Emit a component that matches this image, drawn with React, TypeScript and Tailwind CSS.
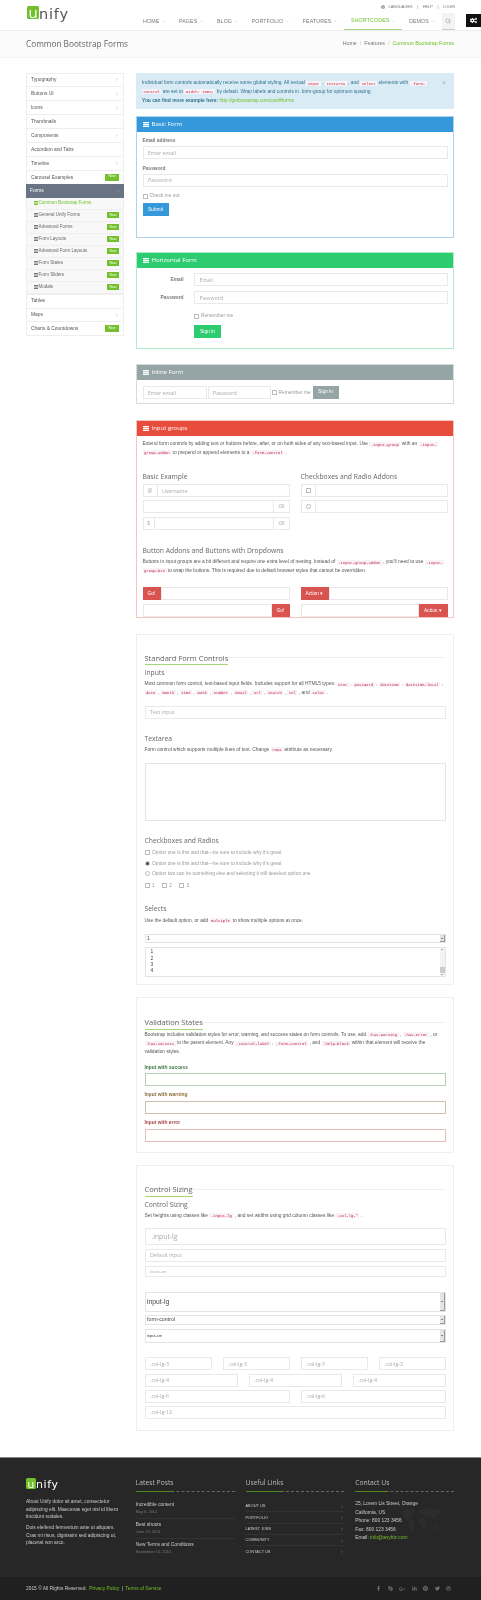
import React from "react";
import { ChevronRight, ChevronDown, Search } from "lucide-react";
import { FaCogs, FaGlobe, FaFacebookF, FaSkype, FaGooglePlusG, FaLinkedinIn, FaPinterest, FaTwitter, FaDribbble } from "react-icons/fa";

const C = ({ children }: { children: React.ReactNode }) => (
  <code className="font-['Liberation_Mono',monospace] text-[3.9px] text-[#c7254e] bg-[#f9f2f4] px-[1.5px] py-[0.5px]">{children}</code>
);

const Inp = ({ ph, className = "" }: { ph?: string; className?: string }) => (
  <input readOnly placeholder={ph} className={"block w-full min-w-0 h-[13px] border border-[#e9e9e9] px-[4.5px] text-[5.25px] font-['Open_Sans',sans-serif] bg-white outline-none placeholder:text-[#aaa] " + className} />
);

const Check = ({ round = false, dot = false }: { round?: boolean; dot?: boolean }) => (
  <span className={"inline-flex items-center justify-center shrink-0 w-[5px] h-[5px] border border-[#bbb] bg-white " + (round ? "rounded-full" : "rounded-[0.5px]")}>
    {dot && <span className="w-[3px] h-[3px] rounded-full bg-[#444]" />}
  </span>
);

const TaskIcon = () => (
  <svg width="6" height="5" viewBox="0 0 6 5" className="shrink-0">
    <rect width="6" height="1.3" y="0" fill="#fff" />
    <rect width="6" height="1.3" y="1.85" fill="#fff" />
    <rect width="6" height="1.3" y="3.7" fill="#fff" />
  </svg>
);

const Panel = ({ title, bg, border, h, children }: { title: string; bg: string; border: string; h: string; children: React.ReactNode }) => (
  <section className={"border rounded-[0.5px] bg-white " + border + " " + h}>
    <div className={"h-[14.5px] flex items-center gap-[3px] pl-[5.5px] text-white text-[6px] font-['Open_Sans',sans-serif] " + bg}>
      <TaskIcon />
      {title}
    </div>
    {children}
  </section>
);

const Box = ({ h, children }: { h: string; children: React.ReactNode }) => (
  <section className={"border border-[#efefef] bg-white px-[7.5px] " + h}>{children}</section>
);

const H2 = ({ children, pt }: { children: React.ReactNode; pt: string }) => (
  <div className={"border-b border-[#f0f0f0] h-[14.5px] " + pt}>
    <span className="inline-block h-[14.5px] leading-[14px] text-[7.5px] text-[#666] font-['Open_Sans',sans-serif] border-b-[1.2px] border-[#a5d77a]">{children}</span>
  </div>
);

const H4 = ({ children, cls = "" }: { children: React.ReactNode; cls?: string }) => (
  <div className={"text-[6.75px] leading-[9px] text-[#666] font-['Open_Sans',sans-serif] " + cls}>{children}</div>
);

const P = ({ children, cls = "" }: { children: React.ReactNode; cls?: string }) => (
  <p className={"text-[4.875px] leading-[7.8px] text-[#555] " + cls}>{children}</p>
);

const Select = ({ label, h, text }: { label: string; h: string; text: string }) => (
  <div className={"flex items-center border border-[#e4e4e4] bg-white pl-[1.5px] text-[#444] " + h + " " + text}>
    <span className="grow">{label}</span>
    <span className="w-[5px] h-full bg-[#e4e4e4] border-r border-b border-[#999] flex items-center justify-center">
      <span className="border-l-[1.2px] border-r-[1.2px] border-t-[1.5px] border-l-transparent border-r-transparent border-t-[#222]" />
    </span>
  </div>
);

const side = [
  ["Typography", "c"], ["Buttons UI", "c"], ["Icons", "c"], ["Thumbnails", ""], ["Components", "c"],
  ["Accordion and Tabs", ""], ["Timeline", "c"], ["Carousel Examples", "n"],
];
const subs = [
  ["Common Bootstrap Forms", 0], ["General Unify Forms", 1], ["Advanced Forms", 1], ["Form Layouts", 1],
  ["Advanced Form Layouts", 1], ["Form States", 1], ["Form Sliders", 1], ["Modals", 1],
] as [string, number][];

const SideRow = ({ label, kind }: { label: string; kind: string }) => (
  <div className="h-[14.9px] flex items-center justify-between border border-[#eee] -mb-px px-[4px] text-[4.875px] text-[#555] bg-white">
    <span>{label}</span>
    {kind === "c" && <ChevronRight size={4} strokeWidth={2} className="text-[#888]" />}
    {kind === "n" && <span className="bg-[#72c02c] text-white text-[3.6px] w-[14px] h-[7px] flex items-center justify-center">New</span>}
  </div>
);

const Sidebar = () => (
  <aside className="w-[98px] shrink-0">
    {side.map(([l, k]) => <SideRow key={l} label={l} kind={k} />)}
    <div className="h-[14px] relative flex items-center justify-between bg-[#687483] px-[4px] text-[4.875px] text-white">
      <span>Forms</span>
      <ChevronDown size={4} strokeWidth={2} className="text-[#ccc]" />
    </div>
    {subs.map(([l, n]) => (
      <div key={l} className="h-[12px] flex items-center justify-between bg-[#f8f8f8] border-b border-x border-[#eee] pl-[6.5px] pr-[4px] text-[4.5px]">
        <span className={"flex items-center gap-[1px] " + (n ? "text-[#666]" : "text-[#72c02c]")}>
          <span className={"w-[4px] h-[3.4px] border-y-[1px] " + (n ? "border-[#777] bg-[#bbb]" : "border-[#72c02c] bg-[#b8df95]")} />
          {l}
        </span>
        {n ? <span className="bg-[#72c02c] text-white text-[3.4px] w-[12px] h-[6.5px] flex items-center justify-center">New</span> : null}
      </div>
    ))}
    <SideRow label="Tables" kind="" />
    <SideRow label="Maps" kind="c" />
    <SideRow label="Charts & Countdowns" kind="n" />
  </aside>
);

const Logo = ({ dark }: { dark?: boolean }) => (
  <div className="flex items-start">
    <span className={"bg-[#72c02c] text-white rounded-[1.5px] flex items-end justify-center font-['Open_Sans',sans-serif] " + (dark ? "w-[9.5px] h-[11px] text-[11px] leading-[11px]" : "w-[12px] h-[13px] text-[15px] leading-[13px]")}>u</span>
    <span className={"font-['DejaVu_Sans',sans-serif] " + (dark ? "text-white text-[11px] leading-[14px] tracking-[0.6px] pl-[0.5px]" : "text-[#555] text-[14.5px] leading-[17px] tracking-[0.8px]")}>nify</span>
  </div>
);

const Header = () => (
  <header className="h-[31px] border-b border-[#eee] bg-white relative">
    <div className="flex justify-between pl-[27px] pr-[26px]">
      <div className="pt-[6px]"><Logo /></div>
      <div className="flex flex-col items-end">
        <div className="h-[13px] flex items-center gap-[3px] text-[3.9px] text-[#777]">
          <FaGlobe className="w-[4px] h-[4px]" /> LANGUAGES <span className="px-[1.5px]">|</span> HELP <span className="px-[1.5px]">|</span> LOGIN
        </div>
        <nav className="h-[17px] flex items-stretch text-[5.25px] tracking-[0.15px] text-[#777]">
          {["HOME", "PAGES", "BLOG", "PORTFOLIO", "FEATURES", "SHORTCODES", "DEMOS"].map((n) => (
            <div key={n} className={"flex items-center gap-[2.5px] px-[7px] " + (n === "SHORTCODES" ? "text-[#72c02c] border-b-[1.5px] border-[#a5d77a]" : "")}>
              {n}<ChevronDown size={3} strokeWidth={2} />
            </div>
          ))}
          <div className="w-[13.5px] bg-[#f3f3f3] border-b-[1.5px] border-[#ccc] flex items-center justify-center">
            <Search size={6} strokeWidth={1.5} className="text-[#777]" />
          </div>
        </nav>
      </div>
    </div>
    <div className="absolute right-0 top-[14px] w-[15px] h-[13px] bg-[#111] flex items-center justify-center text-white">
      <FaCogs className="w-[7px] h-[7px]" />
    </div>
  </header>
);

const PageBar = () => (
  <div className="h-[27px] bg-[#fbfbfb] border-b border-[#f5f5f5] flex items-center justify-between pl-[26px] pr-[27px]">
    <div className="text-[8.25px] text-[#666] font-['Open_Sans',sans-serif]">Common Bootstrap Forms</div>
    <div className="text-[5.25px] text-[#777] flex gap-[3px]">
      <span>Home</span><span className="text-[#bbb]">/</span><span>Features</span><span className="text-[#bbb]">/</span><span className="text-[#72c02c]">Common Bootstrap Forms</span>
    </div>
  </div>
);

const Label = ({ children, cls = "" }: { children: React.ReactNode; cls?: string }) => (
  <div className={"text-[4.875px] leading-[7px] font-bold text-[#777] " + cls}>{children}</div>
);

const AddOn = ({ children, cls = "" }: { children: React.ReactNode; cls?: string }) => (
  <span className={"h-[13px] flex items-center justify-center shrink-0 border border-[#e9e9e9] text-[4.875px] text-[#aaa] bg-white " + cls}>{children}</span>
);

const Btn = ({ children, cls = "" }: { children: React.ReactNode; cls?: string }) => (
  <span className={"flex items-center justify-center shrink-0 text-white text-[4.875px] h-[13px] " + cls}>{children}</span>
);

const Main = () => (
  <main className="w-[318px] ml-[12px]">
    <div className="h-[36px] mt-[0.5px] bg-[#d9ecf6] pl-[6px] pt-[6px] relative">
      <P cls="!text-[#31708f]">
        Individual form controls automatically receive some global styling. All textual <C>input</C> , <C>textarea</C> , and <C>select</C> elements with <C>.form-</C><br />
        <C>control</C> are set to <C>width: 100%;</C> by default. Wrap labels and controls in .form-group for optimum spacing.<br />
        <b>You can find more example here:</b> <span className="text-[#72c02c]">http://getbootstrap.com/css/#forms</span>
      </P>
      <span className="absolute right-[8px] top-[6px] text-[7px] leading-[8px] text-[#aab]">×</span>
    </div>

    <div className="mt-[7px]">
      <Panel title="Basic Form" bg="bg-[#3498db]" border="border-[#a9d3f0]" h="h-[122px]">
        <div className="px-[5.5px] pt-[5px]">
          <Label>Email address</Label>
          <Inp ph="Enter email" className="mt-[2.5px]" />
          <Label cls="mt-[5.5px]">Password</Label>
          <Inp ph="Password" className="mt-[2px]" />
          <div className="flex items-center gap-[2px] mt-[6.5px] text-[4.875px] text-[#999] h-[6px]"><Check /> Check me out</div>
          <Btn cls="bg-[#3498db] w-[26px] mt-[4px]">Submit</Btn>
        </div>
      </Panel>
    </div>

    <div className="mt-[14px]">
      <Panel title="Horizontal Form" bg="bg-[#2ecc71]" border="border-[#b3ecca]" h="h-[97px]">
        <div className="pt-[5.5px] pr-[5.5px]">
          <div className="flex items-center">
            <Label cls="w-[46.5px] text-right shrink-0">Email</Label>
            <Inp ph="Email" className="ml-[10.5px]" />
          </div>
          <div className="flex items-center mt-[5px]">
            <Label cls="w-[46.5px] text-right shrink-0">Password</Label>
            <Inp ph="Password" className="ml-[10.5px]" />
          </div>
          <div className="ml-[57px]">
            <div className="flex items-center gap-[2px] mt-[9px] text-[4.875px] text-[#999] h-[6px]"><Check /> Remember me</div>
            <Btn cls="bg-[#2ecc71] w-[27px] mt-[6px]">Sign in</Btn>
          </div>
        </div>
      </Panel>
    </div>

    <div className="mt-[15px]">
      <Panel title="Inline Form" bg="bg-[#95a5a6]" border="border-[#d5dcdd]" h="h-[40px]">
        <div className="flex items-center pl-[5.5px] pt-[6.5px]">
          <Inp ph="Enter email" className="!w-[64px]" />
          <Inp ph="Password" className="!w-[63px] ml-[1px]" />
          <span className="ml-[1px] flex items-center gap-[2px] text-[4.875px] text-[#999] w-[40px] whitespace-nowrap"><Check /> Remember me</span>
          <Btn cls="bg-[#95a5a6] w-[26px] ml-[1px] -mt-[1px]">Sign in</Btn>
        </div>
      </Panel>
    </div>

    <div className="mt-[16px]">
      <Panel title="Input groups" bg="bg-[#e74c3c]" border="border-[#f8c4be]" h="h-[198px]">
        <div className="px-[5.5px] pt-[4.5px]">
          <P>
            Extend form controls by adding text or buttons before, after, or on both sides of any text-based input. Use <C>.input-group</C> with an <C>.input-</C><br />
            <C>group-addon</C> to prepend or append elements to a <C>.form-control</C> .
          </P>
          <div className="grid grid-cols-2 gap-x-[11px] mt-[14px]">
            <div>
              <H4 cls="h-[10px]">Basic Example</H4>
              <div className="flex mt-[2.5px]"><AddOn cls="w-[15px]">@</AddOn><Inp ph="Username" className="-ml-px" /></div>
              <div className="flex mt-[3px]"><Inp className="-mr-px" /><AddOn cls="w-[17px]">.00</AddOn></div>
              <div className="flex mt-[4px]"><AddOn cls="w-[12px]">$</AddOn><Inp className="-mx-px" /><AddOn cls="w-[17px]">.00</AddOn></div>
            </div>
            <div>
              <H4 cls="h-[10px]">Checkboxes and Radio Addons</H4>
              <div className="flex mt-[2.5px]"><AddOn cls="w-[15px]"><Check /></AddOn><Inp className="-ml-px" /></div>
              <div className="flex mt-[3px]"><AddOn cls="w-[15px]"><Check round /></AddOn><Inp className="-ml-px" /></div>
            </div>
          </div>
          <H4 cls="mt-[15.5px]">Button Addons and Buttons with Dropdowns</H4>
          <P cls="mt-[3.5px]">
            Buttons in input groups are a bit different and require one extra level of nesting. Instead of <C>.input-group-addon</C> , you'll need to use <C>.input-</C><br />
            <C>group-btn</C> to wrap the buttons. This is required due to default browser styles that cannot be overridden.
          </P>
          <div className="grid grid-cols-2 gap-x-[11px] gap-y-[4px] mt-[11.4px]">
            <div className="flex"><Btn cls="bg-[#d9534f] w-[18px]">Go!</Btn><Inp /></div>
            <div className="flex"><Btn cls="bg-[#d9534f] w-[28px]">Action ▾</Btn><Inp /></div>
            <div className="flex"><Inp /><Btn cls="bg-[#d9534f] w-[18px]">Go!</Btn></div>
            <div className="flex"><Inp /><Btn cls="bg-[#d9534f] w-[29px]">Action ▾</Btn></div>
          </div>
        </div>
      </Panel>
    </div>

    <div className="mt-[16px]">
      <Box h="h-[351px]">
        <H2 pt="mt-[8.5px]">Standard Form Controls</H2>
        <H4 cls="mt-[9.5px]">Inputs</H4>
        <P cls="mt-[3.5px]">
          Most common form control, text-based input fields. Includes support for all HTML5 types: <C>text</C> , <C>password</C> , <C>datetime</C> , <C>datetime-local</C> ,<br />
          <C>date</C> , <C>month</C> , <C>time</C> , <C>week</C> , <C>number</C> , <C>email</C> , <C>url</C> , <C>search</C> , <C>tel</C> , and <C>color</C> .
        </P>
        <Inp ph="Text input" className="mt-[8.4px]" />
        <H4 cls="mt-[15.5px]">Textarea</H4>
        <P cls="mt-[2.5px]">Form control which supports multiple lines of text. Change <C>rows</C> attribute as necessary.</P>
        <div className="mt-[8px] h-[58px] border border-[#e4e4e4]" />
        <H4 cls="mt-[15.5px]">Checkboxes and Radios</H4>
        <div className="text-[4.875px] text-[#999] leading-[6px]">
          <div className="flex items-center gap-[2.5px] mt-[4.5px]"><Check /> Option one is this and that—be sure to include why it's great</div>
          <div className="flex items-center gap-[2.5px] mt-[5px]"><Check round dot /> Option one is this and that—be sure to include why it's great</div>
          <div className="flex items-center gap-[2.5px] mt-[4px]"><Check round /> Option two can be something else and selecting it will deselect option one</div>
          <div className="flex items-center mt-[6px] gap-[7px]">
            <span className="flex items-center gap-[2.5px]"><Check /> 1</span>
            <span className="flex items-center gap-[2.5px]"><Check /> 2</span>
            <span className="flex items-center gap-[2.5px]"><Check /> 3</span>
          </div>
        </div>
        <H4 cls="mt-[15.5px]">Selects</H4>
        <P cls="mt-[3.5px]">Use the default option, or add <C>multiple</C> to show multiple options at once.</P>
        <div className="mt-[8.7px]"><Select label="1" h="h-[9px]" text="text-[4.875px]" /></div>
        <div className="mt-[4px] h-[30px] border border-[#e4e4e4] flex">
          <div className="grow pl-[5px] pt-[1px] text-[4.875px] leading-[6.3px] text-[#444]">1<br />2<br />3<br />4</div>
          <div className="w-[5px] bg-[#f3f3f3] flex flex-col items-center justify-between py-[1px]">
            <span className="border-l-[1.2px] border-r-[1.2px] border-b-[1.5px] border-l-transparent border-r-transparent border-b-[#666]" />
            <span className="w-full h-[6px] bg-[#ccc] mt-auto mb-[1px]" />
            <span className="border-l-[1.2px] border-r-[1.2px] border-t-[1.5px] border-l-transparent border-r-transparent border-t-[#666]" />
          </div>
        </div>
      </Box>
    </div>

    <div className="mt-[12px]">
      <Box h="h-[156px]">
        <H2 pt="mt-[10px]">Validation States</H2>
        <P cls="mt-[8px]">
          Bootstrap includes validation styles for error, warning, and success states on form controls. To use, add <C>.has-warning</C> , <C>.has-error</C> , or<br />
          <C>.has-success</C> to the parent element. Any <C>.control-label</C> , <C>.form-control</C> , and <C>.help-block</C> within that element will receive the<br />
          validation styles.
        </P>
        <Label cls="!text-[#3c763d] mt-[8px]">Input with success</Label>
        <Inp className="!border-[#b7cfb8] mt-[2px]" />
        <Label cls="!text-[#8a6d3b] mt-[5.5px]">Input with warning</Label>
        <Inp className="!border-[#cbbfae] mt-[2.5px]" />
        <Label cls="!text-[#a94442] mt-[5.5px]">Input with error</Label>
        <Inp className="!border-[#e6bcbc] mt-[2.5px]" />
      </Box>
    </div>

    <div className="mt-[12px]">
      <Box h="h-[266px]">
        <H2 pt="mt-[9px]">Control Sizing</H2>
        <H4 cls="mt-[10px]">Control Sizing</H4>
        <P cls="mt-[3px]">Set heights using classes like <C>.input-lg</C> , and set widths using grid column classes like <C>.col-lg-*</C> .</P>
        <Inp ph=".input-lg" className="mt-[7.6px] !h-[17px] !text-[6.75px] !px-[6px]" />
        <Inp ph="Default input" className="mt-[4px]" />
        <Inp ph="input-sm" className="mt-[4px] !h-[11.5px] !text-[3.9px]" />
        <div className="mt-[14.5px]"><Select label="input-lg" h="h-[20px]" text="text-[6.75px]" /></div>
        <div className="mt-[3px]"><Select label="form-control" h="h-[10.5px]" text="text-[5.25px]" /></div>
        <div className="mt-[3.5px]"><Select label="input-sm" h="h-[14px]" text="text-[3.9px]" /></div>
        <div className="grid grid-cols-4 gap-x-[11px] mt-[14.5px]">
          {[0, 1, 2, 3].map((i) => <Inp key={i} ph=".col-lg-3" />)}
        </div>
        <div className="grid grid-cols-3 gap-x-[11px] mt-[3.5px]">
          {[0, 1, 2].map((i) => <Inp key={i} ph=".col-lg-4" />)}
        </div>
        <div className="grid grid-cols-2 gap-x-[11px] mt-[3px]">
          {[0, 1].map((i) => <Inp key={i} ph=".col-lg-6" />)}
        </div>
        <Inp ph=".col-lg-12" className="mt-[3px]" />
      </Box>
    </div>
  </main>
);

const FootHead = ({ children, g }: { children: React.ReactNode; g: string }) => (
  <div>
    <div className="text-[6.75px] leading-[10px] text-[#bbb] font-['Open_Sans',sans-serif]">{children}</div>
    <div className="mt-[2.5px] border-b border-dashed border-[#666] relative h-px">
      <span className={"absolute left-0 top-0 h-[1.2px] bg-[#4f8a1f] " + g} />
    </div>
  </div>
);

const Footer = () => (
  <footer className="mt-[26px] h-[143px] bg-[#272727] border-t border-[#888] flex flex-col text-[4.875px]">
    <div className="h-[119px] flex pl-[26px] pr-[27px] pt-[20px] relative">
      <div className="w-[98px] mr-[12px] text-[#ccc] leading-[7.5px]">
        <Logo dark />
        <p className="mt-[6px]">About Unify dolor sit amet, consectetur adipiscing elit. Maecenas eget nisl id libero tincidunt sodales.</p>
        <p className="mt-[3.5px]">Duis eleifend fermentum ante ut aliquam. Cras mi risus, dignissim sed adipiscing ut, placerat non arcu.</p>
      </div>
      <div className="w-[99px] mr-[11px]">
        <FootHead g="w-[37px]">Latest Posts</FootHead>
        <div className="mt-[10.5px] text-[#ccc] leading-[6px]">
          <div>Incredible content</div>
          <div className="text-[3.9px] text-[#777] mt-[1px]">May 8, 2014</div>
          <div className="border-t border-[#333] mt-[3px] pt-[3.2px]">Best shoots</div>
          <div className="text-[3.9px] text-[#777] mt-[1px]">June 23, 2014</div>
          <div className="border-t border-[#333] mt-[3px] pt-[3.2px]">New Terms and Conditions</div>
          <div className="text-[3.9px] text-[#777] mt-[1px]">September 15, 2014</div>
        </div>
      </div>
      <div className="w-[99px] mr-[11px]">
        <FootHead g="w-[37px]">Useful Links</FootHead>
        <div className="mt-[9.5px] text-[#ccc] text-[3.9px]">
          {["ABOUT US", "PORTFOLIO", "LATEST JOBS", "COMMUNITY", "CONTACT US"].map((l, i) => (
            <div key={l} className={"h-[11.3px] flex items-center justify-between " + (i < 4 ? "border-b border-[#333]" : "")}>
              {l}<ChevronRight size={4} strokeWidth={2} className="text-[#aaa] mt-[1px]" />
            </div>
          ))}
        </div>
      </div>
      <div className="w-[99px] relative">
        <FootHead g="w-[33px]">Contact Us</FootHead>
        <svg width="42" height="28" viewBox="0 0 42 28" className="absolute left-[45px] top-[29px]">
          <path d="M1 4 L9 1 L15 2 L13 7 L10 10 L12 13 L15 14 L14 20 L12 26 L10 25 L9 17 L5 11 L2 8 Z" fill="#2c2c2c" />
          <path d="M19 3 L26 1 L38 2 L41 6 L37 9 L35 12 L32 11 L29 10 L25 10 L22 8 L19 7 Z" fill="#2c2c2c" />
          <path d="M19 10 L25 11 L27 15 L25 21 L23 23 L21 18 L18 14 Z" fill="#2c2c2c" />
          <path d="M34 18 L39 19 L39 23 L35 22 Z" fill="#2c2c2c" />
        </svg>
        <div className="relative mt-[8.5px] text-[#ccc] leading-[8.55px]">
          25, Lorem Lis Street, Orange<br />California, US<br />Phone: 800 123 3456<br />Fax: 800 123 3456<br />Email: <span className="text-[#72c02c]">info@anybiz.com</span>
        </div>
      </div>
    </div>
    <div className="grow bg-[#202020] flex items-center justify-between pl-[26px] pr-[30px] text-[#ccc]">
      <div>2015 © All Rights Reserved. <span className="text-[#72c02c] ml-[1px]">Privacy Policy</span> <span className="mx-[1px]">|</span> <span className="text-[#72c02c]">Terms of Service</span></div>
      <div className="flex items-center gap-[6.5px] text-[#777]">
        <FaFacebookF className="w-[5px] h-[5px]" />
        <FaSkype className="w-[5px] h-[5px]" />
        <FaGooglePlusG className="w-[6px] h-[6px]" />
        <FaLinkedinIn className="w-[5px] h-[5px]" />
        <FaPinterest className="w-[5px] h-[5px]" />
        <FaTwitter className="w-[5px] h-[5px]" />
        <FaDribbble className="w-[5px] h-[5px]" />
      </div>
    </div>
  </footer>
);

export default function App() {
  return (
    <div className="w-[481px] min-h-[1600px] bg-white font-['Liberation_Sans',sans-serif] overflow-hidden blur-[0.3px]">
      <Header />
      <PageBar />
      <div className="flex pl-[26px] pt-[14.5px]">
        <Sidebar />
        <Main />
      </div>
      <Footer />
    </div>
  );
}
